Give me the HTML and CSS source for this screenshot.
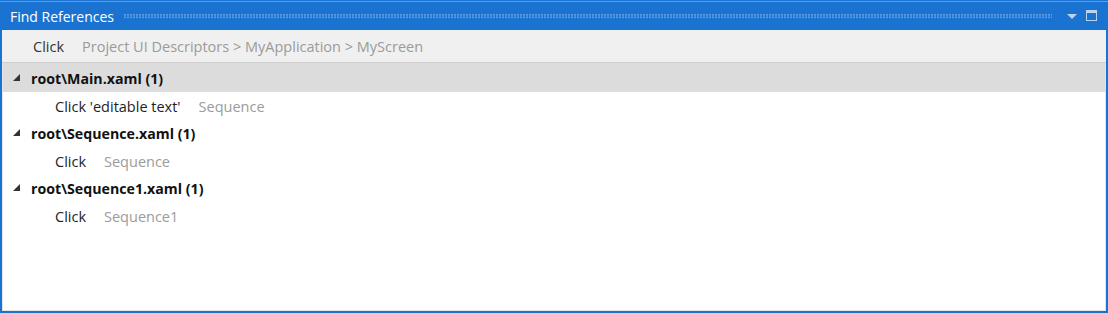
FILE: index.html
```html
<!DOCTYPE html>
<html lang="en">
<head>
  <meta charset="UTF-8">
  <title>Find References</title>
  <link rel="stylesheet" href="styles.css">
</head>
<body>
  <div class="window">
    <div class="titlebar">
      <span class="title">Find References</span>
      <span class="grip"></span>
      <svg class="btn" width="12" height="8" viewBox="0 0 12 8"><path d="M1 2h10l-5 5z" fill="#b9d3f0"/></svg>
      <svg class="btn" width="12" height="12" viewBox="0 0 12 12"><rect x="0.5" y="0.5" width="10" height="10" fill="none" stroke="#b9d3f0"/><rect x="1" y="1" width="9" height="2" fill="#b9d3f0"/></svg>
    </div>
    <div class="toolbar">
      <span class="action">Click</span>
      <span class="path">Project UI Descriptors &gt; MyApplication &gt; MyScreen</span>
    </div>
    <div class="results">
      <div class="row file selected"><span class="arrow"></span>root\Main.xaml (1)</div>
      <div class="row ref"><span>Click 'editable text'</span><span class="scope">Sequence</span></div>
      <div class="row file"><span class="arrow"></span>root\Sequence.xaml (1)</div>
      <div class="row ref"><span>Click</span><span class="scope">Sequence</span></div>
      <div class="row file"><span class="arrow"></span>root\Sequence1.xaml (1)</div>
      <div class="row ref"><span>Click</span><span class="scope">Sequence1</span></div>
    </div>
  </div>
</body>
</html>
```

FILE: styles.css
```css
html, body {
  width: 100%;
  height: 100%;
  overflow: hidden;
}

body {
  margin: 0;
  padding: 0;
  font-family: 'Open Sans', 'Noto Sans', 'Liberation Sans', sans-serif;
  font-size: 14.5px;
  color: #1e1e1e;
  background: #fff;
}

.window {
  box-sizing: border-box;
  width: 1108px;
  height: 313px;
  border: 2px solid #1a73d0;
  border-top: none;
  display: flex;
  flex-direction: column;
}

.titlebar {
  height: 30px;
  margin: 0 -2px;
  padding: 1px 10px 0 10px;
  background: #1a73d0;
  border-top: 1px solid #1a73d0;
  box-shadow: inset 0 1px 0 #5c9ce0;
  display: flex;
  align-items: center;
  gap: 8px;
  box-sizing: border-box;
  color: #fff;
}

.title {
  font-size: 14px;
}

.grip {
  flex: 1;
  height: 5px;
  margin: 1px 6px 0 2px;
  background-image: radial-gradient(circle at 1px 1px, #5e9be0 0.9px, transparent 1.1px);
  background-size: 3px 2.5px;
}

.btn {
  flex: none;
}

.toolbar {
  height: 33px;
  background: #f0f0f0;
  border-bottom: 1px solid #cfcfcf;
  display: flex;
  align-items: center;
  padding-left: 31px;
  gap: 18px;
  box-sizing: border-box;
}

.action {
  color: #333;
}

.path {
  color: #9b9b9b;
}

.results {
  flex: 1;
  border-left: 1px solid #e4e4e4;
  border-right: 1px solid #e4e4e4;
  border-bottom: 1px solid #e4e4e4;
  padding-top: 1px;
}

.row {
  height: 27.5px;
  padding-top: 2px;
  box-sizing: border-box;
  display: flex;
  align-items: center;
}

.row.file {
  font-weight: bold;
  font-size: 14.2px;
  padding-left: 10px;
  color: #111;
}

.row.selected {
  background: #dcdcdc;
  margin-top: -1px;
  height: 28.5px;
  padding-top: 3px;
}

.arrow {
  width: 0;
  height: 0;
  border-left: 7px solid transparent;
  border-bottom: 7px solid #333;
  margin-right: 11px;
  margin-top: -3px;
}

.row.ref {
  padding-left: 52px;
  gap: 18px;
  color: #1e1e1e;
}

.scope {
  color: #9b9b9b;
}
```
